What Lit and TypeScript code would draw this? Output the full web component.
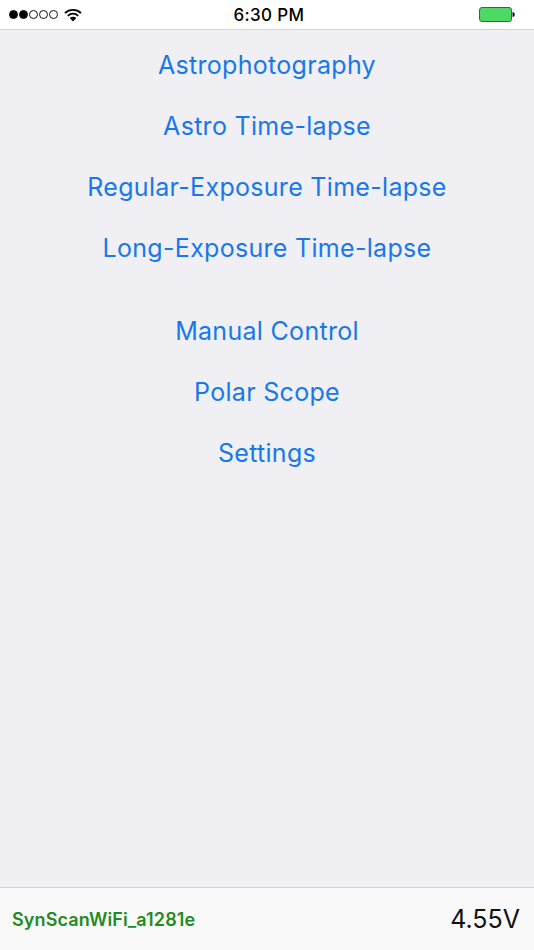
import { LitElement, html, css } from "lit";
import { customElement } from "lit/decorators.js";

@customElement("app-root")
export class AppRoot extends LitElement {
  static styles = css`
    :host { display: flex; flex-direction: column; width: 534px; height: 950px; background: #efeff4; font-family: "Inter", "Liberation Sans", sans-serif; overflow: hidden; }
    .status { height: 29px; flex: none; background: #fff; border-bottom: 1px solid #d4d4d8; display: grid; grid-template-columns: 1fr auto 1fr; align-items: center; padding: 0 19px 0 9px; }
    .left { display: flex; align-items: center; gap: 6px; }
    .dots { display: flex; gap: 1px; }
    .dot { width: 9px; height: 9px; border-radius: 50%; border: 1px solid #111; box-sizing: border-box; }
    .dot.on { background: #000; }
    .time { font-size: 17px; font-weight: 500; color: #000; letter-spacing: 0.35px; margin-left: 14px; }
    .right { justify-self: end; display: flex; }
    .menu { flex: 1; display: flex; flex-direction: column; align-items: center; padding-top: 4.5px; }
    .group { display: flex; flex-direction: column; align-items: center; margin-bottom: 21.6px; }
    .item { height: 61.2px; line-height: 61.2px; font-size: 25px; color: #1878ea; letter-spacing: 0.3px; white-space: nowrap; }
    .bottom { height: 62px; flex: none; background: #f9f9f9; border-top: 1px solid #cfcfd2; display: flex; align-items: center; justify-content: space-between; padding: 0 14px 0 12px; }
    .ssid { font-size: 18px; font-weight: 600; color: #1e8c22; letter-spacing: 0.12px; }
    .volt { font-size: 25px; color: #111; }
  `;
  render() {
    const g1 = ["Astrophotography", "Astro Time-lapse", "Regular-Exposure Time-lapse", "Long-Exposure Time-lapse"];
    const g2 = ["Manual Control", "Polar Scope", "Settings"];
    return html`
      <div class="status">
        <div class="left">
          <div class="dots">${[1, 1, 0, 0, 0].map((o) => html`<span class="dot ${o ? "on" : ""}"></span>`)}</div>
          <svg width="18" height="14" viewBox="0 0 18 14">
            <path d="M1 5 C5.4 .8 12.6 .8 17 5" fill="none" stroke="#000" stroke-width="1.8"/>
            <path d="M3.8 7.8 C6.8 5 11.2 5 14.2 7.8" fill="none" stroke="#000" stroke-width="1.8"/>
            <path d="M9 13.5 L5.7 10 C7.6 8.4 10.4 8.4 12.3 10 Z" fill="#000"/>
          </svg>
        </div>
        <div class="time">6:30 PM</div>
        <div class="right">
          <svg width="36" height="15" viewBox="0 0 36 15">
            <rect x="0.5" y="0.5" width="32" height="14" rx="2.5" fill="#4cd964" stroke="#555"/>
            <path d="M33.5 5 c1.4 .2 2.2 1 2.2 2.5 s-.8 2.3 -2.2 2.5 Z" fill="#111"/>
          </svg>
        </div>
      </div>
      <div class="menu">
        <div class="group">${g1.map((t) => html`<div class="item">${t}</div>`)}</div>
        <div class="group">${g2.map((t) => html`<div class="item">${t}</div>`)}</div>
      </div>
      <div class="bottom"><span class="ssid">SynScanWiFi_a1281e</span><span class="volt">4.55V</span></div>
    `;
  }
}
